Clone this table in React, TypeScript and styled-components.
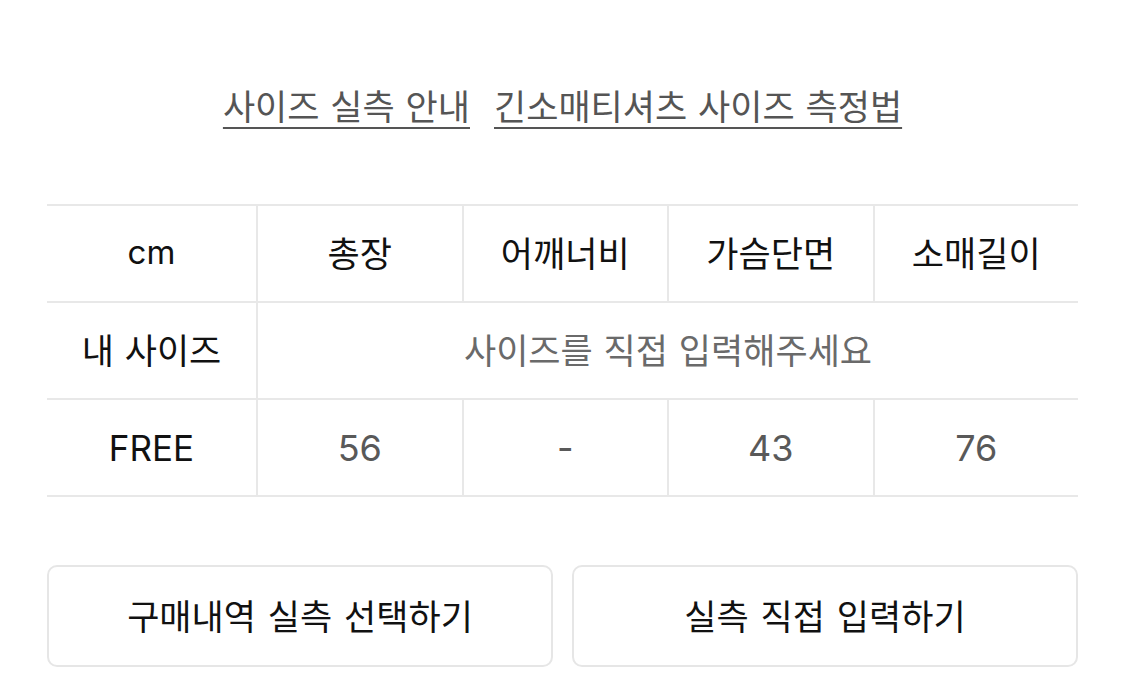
import React from "react";
import styled, { createGlobalStyle } from "styled-components";

const Global = createGlobalStyle`
  html, body { margin: 0; padding: 0; background: #fff; }
  body { font-family: "Inter", "Noto Sans CJK KR", sans-serif; }
`;

const Page = styled.div`
  width: 1125px;
  height: 681px;
  box-sizing: border-box;
  padding: 80px 47px 0;
  overflow: hidden;
`;

const LinkRow = styled.div`
  display: flex;
  justify-content: center;
  gap: 24px;
  height: 60px;
  align-items: flex-start;
`;

const GuideLink = styled.a`
  font-family: "Noto Sans CJK KR", sans-serif;
  font-size: 35px;
  line-height: 50px;
  color: #555;
  word-spacing: 3px;
  text-decoration: underline;
  text-decoration-thickness: 2px;
  text-underline-offset: 7px;
  cursor: pointer;
`;

const Table = styled.div`
  margin-top: 64px;
  display: grid;
  grid-template-columns: 209px repeat(4, 1fr);
  border-top: 2px solid #e8e8e8;
`;

const Cell = styled.div<{ $first?: boolean; $span?: number; $tone?: "head" | "value" | "hint" }>`
  height: 97px;
  display: flex;
  align-items: center;
  justify-content: center;
  padding-bottom: ${(p) => (p.$tone === "value" ? "0" : "4px")};
  box-sizing: border-box;
  border-bottom: 2px solid #e8e8e8;
  border-left: ${(p) => (p.$first ? "none" : "2px solid #e8e8e8")};
  grid-column: ${(p) => (p.$span ? `span ${p.$span}` : "auto")};
  color: ${(p) => (p.$tone === "value" ? "#595959" : p.$tone === "hint" ? "#6a6a6a" : "#111")};
  font-family: "Noto Sans CJK KR", sans-serif;
  font-size: 35px;
  word-spacing: 3px;
`;

const Latin = styled.span<{ $size: number; $dark?: boolean }>`
  font-family: "Inter", sans-serif;
  font-size: ${(p) => p.$size}px;
  color: ${(p) => (p.$dark ? "#111" : "inherit")};
  word-spacing: 0;
`;

const ButtonRow = styled.div`
  margin-top: 68px;
  display: grid;
  grid-template-columns: 1fr 1fr;
  gap: 19px;
`;

const ActionButton = styled.button`
  height: 102px;
  padding: 0 0 4px;
  background: #fff;
  border: 2px solid #e6e6e6;
  border-radius: 10px;
  font-family: "Noto Sans CJK KR", sans-serif;
  font-size: 35px;
  color: #111;
  word-spacing: 4px;
  cursor: pointer;
`;

const headers = ["총장", "어깨너비", "가슴단면", "소매길이"];
const values = ["56", "-", "43", "76"];

export default function App() {
  return (
    <>
      <Global />
      <Page>
        <LinkRow>
          <GuideLink>사이즈 실측 안내</GuideLink>
          <GuideLink>긴소매티셔츠 사이즈 측정법</GuideLink>
        </LinkRow>
        <Table>
          <Cell $first>
            <Latin $size={33}>cm</Latin>
          </Cell>
          {headers.map((h) => (
            <Cell key={h}>{h}</Cell>
          ))}
          <Cell $first>내 사이즈</Cell>
          <Cell $span={4} $tone="hint">
            사이즈를 직접 입력해주세요
          </Cell>
          <Cell $first $tone="value">
            <Latin $size={35} $dark>FREE</Latin>
          </Cell>
          {values.map((v, i) => (
            <Cell key={i} $tone="value">
              <Latin $size={36}>{v}</Latin>
            </Cell>
          ))}
        </Table>
        <ButtonRow>
          <ActionButton>구매내역 실측 선택하기</ActionButton>
          <ActionButton>실측 직접 입력하기</ActionButton>
        </ButtonRow>
      </Page>
    </>
  );
}
